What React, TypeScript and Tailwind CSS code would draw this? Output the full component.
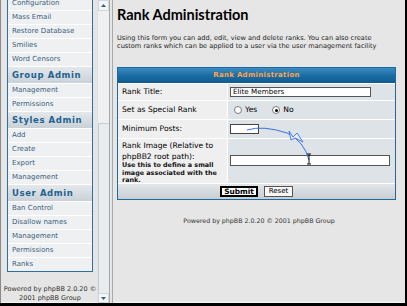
const navGroups = [
  { title: null, items: ["Configuration", "Mass Email", "Restore Database", "Smilies", "Word Censors"] },
  { title: "Group Admin", items: ["Management", "Permissions"] },
  { title: "Styles Admin", items: ["Add", "Create", "Export", "Management"] },
  { title: "User Admin", items: ["Ban Control", "Disallow names", "Management", "Permissions", "Ranks"] },
];

const Radio = ({ checked }: { checked?: boolean }) => (
  <span className="w-[8px] h-[8px] rounded-full border border-[#7a7a7a] bg-white flex items-center justify-center">
    {checked && <span className="w-[3px] h-[3px] rounded-full bg-black" />}
  </span>
);

const App = () => {
  return (
    <div className="w-[407px] h-[306px] flex flex-col bg-black overflow-hidden font-['DejaVu_Sans',sans-serif]">
      <div className="flex flex-1 min-h-0 border-l border-[#8a8a8a] mr-[2px] mb-[3px]">
        {/* Left nav frame */}
        <div className="w-[96px] bg-[#e5e5e5] flex flex-col border-b border-[#f4f4f4]">
          <div className="mt-[-4px] ml-[6px] w-[86px] border border-[#2f6f9f] bg-white flex flex-col gap-px">
            {navGroups.map((g, i) => (
              <div key={i} className="flex flex-col gap-px">
                {g.title && (
                  <div className="h-[16px] flex items-center px-[4px] bg-gradient-to-b from-[#e4e8ec] to-[#c9d1d8] text-[8.5px] font-bold tracking-[0.6px] text-[#1f628f]">
                    {g.title}
                  </div>
                )}
                {g.items.map((it, j) => (
                  <div key={j} className="h-[13px] flex items-center px-[4px] bg-[#eff0f1] text-[7px] text-[#3b5f80]">
                    {it}
                  </div>
                ))}
              </div>
            ))}
          </div>
          <div className="mt-[13px] text-center text-[6.5px] leading-[9px] text-[#333] pl-[2px]">
            Powered by phpBB 2.0.20 ©<br />2001 phpBB Group
          </div>
        </div>

        {/* Scrollbar */}
        <div className="w-[12px] bg-[#eef0f2] flex flex-col border-l border-[#dfe3e6]">
          <div className="h-[11px] flex items-center justify-center bg-[#f4f5f6] border border-[#cfd6dc]">
            <svg width="5" height="3" viewBox="0 0 5 3"><path d="M0 3 L2.5 0 L5 3 Z" fill="#2c5f8a" /></svg>
          </div>
          <div className="h-[112px]" />
          <div className="flex-1 border-l border-t border-[#c6ccd2] bg-[#e8ecef]" />
          <div className="h-[10px] flex items-center justify-center bg-[#f4f5f6] border border-[#cfd6dc]">
            <svg width="5" height="3" viewBox="0 0 5 3"><path d="M0 0 L2.5 3 L5 0 Z" fill="#2c5f8a" /></svg>
          </div>
        </div>

        {/* Frame divider */}
        <div className="w-[4px] bg-[#e5e5e5] border-l border-r border-[#a8a8a8]" />

        {/* Main frame */}
        <div className="flex-1 bg-[#e6e6e6] flex flex-col pl-[4px] border-b border-[#f4f4f4] relative">
          <h1 className="mt-[5px] text-[14.5px] leading-[20px] font-bold text-black font-['Lato',sans-serif]">Rank Administration</h1>
          <p className="mt-[9px] text-[6.6px] leading-[8px] text-[#222] w-[276px]">
            Using this form you can add, edit, view and delete ranks. You can also create custom ranks which can be applied to a user via the user management facility
          </p>

          <div className="mt-[17px] w-[279px] border border-[#1e6a9c] bg-white flex flex-col gap-px text-[7.6px] text-black">
            <div className="h-[15px] flex items-center justify-center bg-gradient-to-b from-[#3a8cc2] via-[#1a6da3] to-[#0e5c90] text-[#ffa34f] font-bold text-[7px] tracking-[0.3px]">
              Rank Administration
            </div>
            <div className="flex gap-px h-[16px]">
              <div className="w-[109px] bg-[#efefef] flex items-center pl-[4px]">Rank Title:</div>
              <div className="flex-1 bg-[#dee3e7] flex items-center pl-[2px]">
                <div className="w-[141px] h-[10px] border border-[#555] bg-white flex items-center px-[2px] text-[7.2px]">Elite Members</div>
              </div>
            </div>
            <div className="flex gap-px h-[18px]">
              <div className="w-[109px] bg-[#efefef] flex items-center pl-[4px]">Set as Special Rank</div>
              <div className="flex-1 bg-[#dee3e7] flex items-center pl-[6px] gap-[3px]">
                <Radio />
                <span>Yes</span>
                <span className="w-[9px]" />
                <Radio checked />
                <span>No</span>
              </div>
            </div>
            <div className="flex gap-px h-[18px]">
              <div className="w-[109px] bg-[#efefef] flex items-center pl-[4px]">Minimum Posts:</div>
              <div className="flex-1 bg-[#dee3e7] flex items-center pl-[2px]">
                <div className="w-[29px] h-[10px] border border-[#444] bg-white" />
              </div>
            </div>
            <div className="flex gap-px h-[44px]">
              <div className="w-[109px] bg-[#efefef] flex flex-col pl-[4px] pr-[10px] pt-[2px]">
                <span className="leading-[10.5px]">Rank Image (Relative to phpBB2 root path):</span>
                <span className="text-[6.4px] leading-[7.5px] font-semibold text-[#111]">Use this to define a small image associated with the rank.</span>
              </div>
              <div className="flex-1 bg-[#dee3e7] flex items-center pl-[2px] pb-[2px]">
                <div className="w-[160px] h-[11px] border border-[#555] bg-white" />
              </div>
            </div>
            <div className="h-[15px] flex items-center justify-center gap-[6px] bg-gradient-to-b from-[#e2e6e9] to-[#c7ced4]">
              <button className="h-[11px] w-[38px] border-2 border-black bg-white font-bold text-[7.4px] leading-none">Submit</button>
              <button className="h-[11px] w-[29px] border border-[#555] bg-[#f7f7f7] text-[7px] leading-none">Reset</button>
            </div>
          </div>

          <div className="mt-[16px] w-[292px] ml-[-4px] text-center text-[6.3px] text-[#333]">
            Powered by phpBB 2.0.20 © 2001 phpBB Group
          </div>

          {/* hand-drawn annotation arrow */}
          <svg className="absolute left-0 top-0" width="293" height="303" viewBox="112 0 293 303">
            <path d="M246 130 Q 262 125 286 133 Q 303 141 308 160" fill="none" stroke="#3b6fe0" strokeWidth="1" />
            <path d="M288 131 L 292 137 L 296 133 L 302 142 L 294 138 L 290 140 Z" fill="#e8eefc" stroke="#3b6fe0" strokeWidth="0.9" />
            <path d="M308 154 L 308 164 M306 154 L 310 154 M306 164 L 310 164" stroke="#111" strokeWidth="1" />
          </svg>
        </div>
      </div>
    </div>
  );
};

export default App;
